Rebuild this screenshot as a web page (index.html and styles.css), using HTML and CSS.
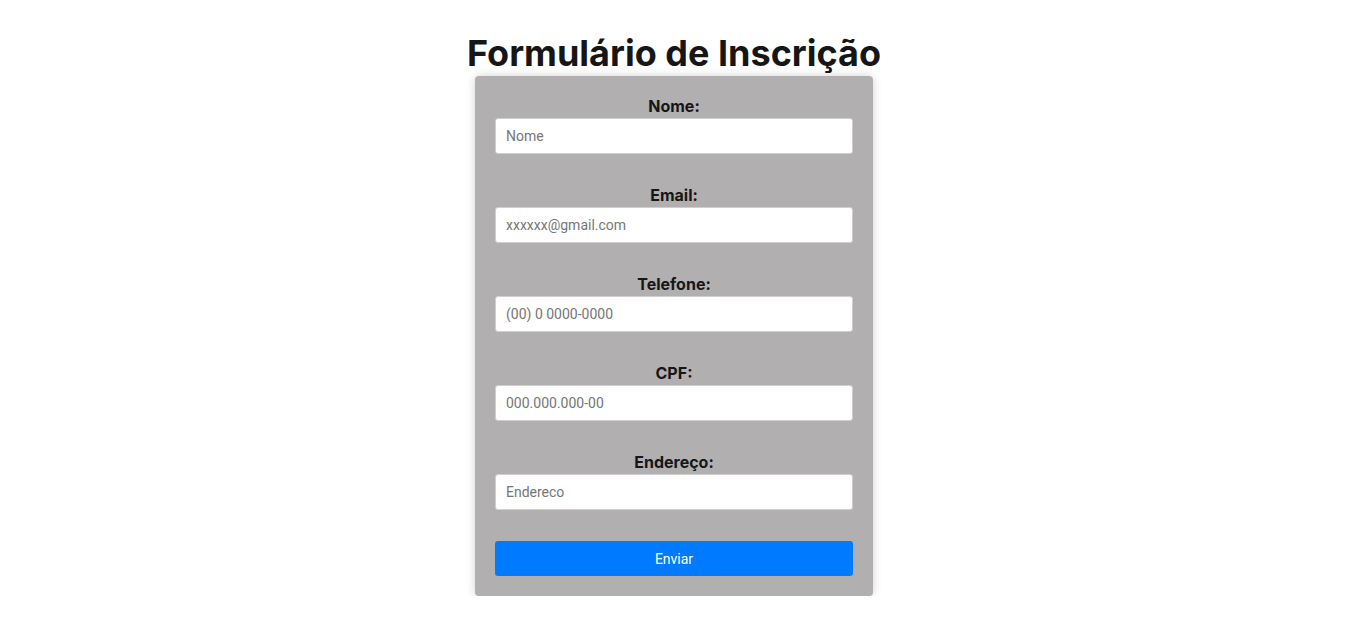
FILE: index.html
```html
<!DOCTYPE html>
<html lang="pt-BR">
<head>
<meta charset="utf-8">
<title>Formulário de Inscrição</title>
<link rel="stylesheet" href="styles.css">
</head>
<body>
<main class="page">
  <h1 class="title">Formulário de Inscrição</h1>
  <form class="card">
    <div class="group">
      <label class="label" for="nome">Nome:</label>
      <input class="field" id="nome" type="text" placeholder="Nome">
    </div>
    <div class="group">
      <label class="label" for="email">Email:</label>
      <input class="field" id="email" type="email" placeholder="xxxxxx@gmail.com">
    </div>
    <div class="group">
      <label class="label" for="tel">Telefone:</label>
      <input class="field" id="tel" type="tel" placeholder="(00) 0 0000-0000">
    </div>
    <div class="group">
      <label class="label" for="cpf">CPF:</label>
      <input class="field" id="cpf" type="text" placeholder="000.000.000-00">
    </div>
    <div class="group">
      <label class="label" for="end">Endereço:</label>
      <input class="field" id="end" type="text" placeholder="Endereco">
    </div>
    <button class="submit" type="submit">Enviar</button>
  </form>
</main>
</body>
</html>
```
FILE: styles.css
```css
* { box-sizing: border-box; }
html, body { margin: 0; padding: 0; background: #ffffff; }
.page {
  display: flex;
  flex-direction: column;
  align-items: center;
  padding-top: 30px;
  padding-left: 2px;
}
.title {
  margin: 0;
  font-family: Inter, "Noto Sans", sans-serif;
  font-weight: 700;
  font-size: 36px;
  line-height: 46px;
  color: #161616;
}
.card {
  width: 398px;
  background: #b1afb0;
  border-radius: 4px;
  padding: 20px;
  box-shadow: 0 0 10px rgba(0,0,0,0.18);
  display: flex;
  flex-direction: column;
}
.group {
  display: flex;
  flex-direction: column;
  margin-bottom: 31px;
}
.label {
  font-family: Inter, "Noto Sans", sans-serif;
  font-weight: 700;
  font-size: 16px;
  line-height: 20px;
  text-align: center;
  color: #161616;
  margin-bottom: 2px;
}
.field {
  height: 36px;
  width: 100%;
  border: 1px solid #cfcfcf;
  border-radius: 3px;
  background: #fff;
  padding: 0 10px;
  font-family: Roboto, "Liberation Sans", sans-serif;
  font-size: 14px;
  color: #333;
}
.field::placeholder { color: #767676; }
.submit {
  height: 35px;
  width: 100%;
  border: none;
  border-radius: 3px;
  background: #007bff;
  color: #fff;
  font-family: Roboto, "Liberation Sans", sans-serif;
  font-size: 14px;
  cursor: pointer;
}
```
